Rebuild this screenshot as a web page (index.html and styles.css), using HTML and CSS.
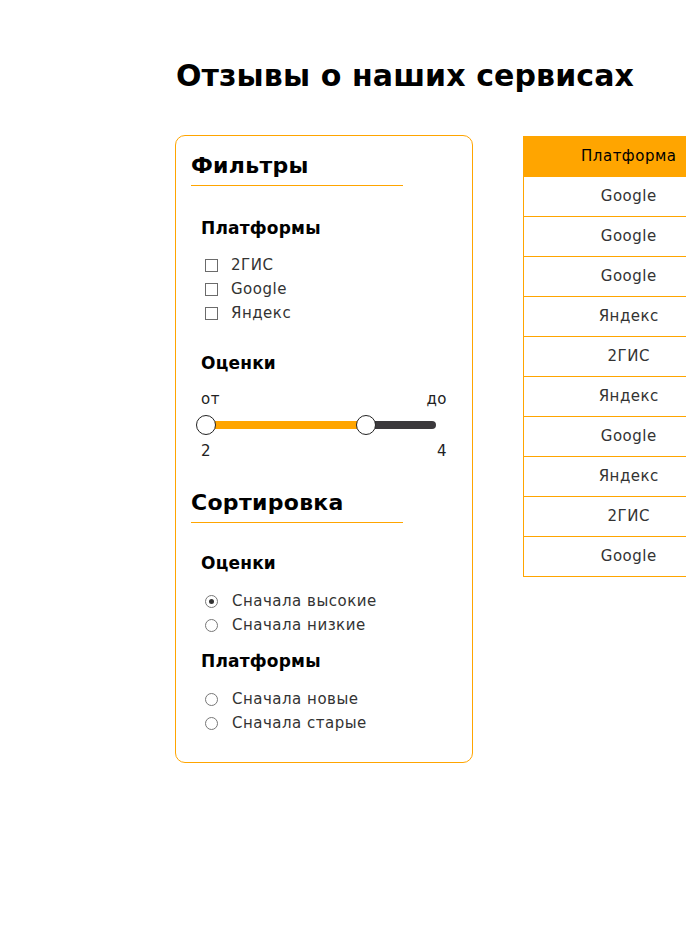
FILE: index.html
```html
<!DOCTYPE html>
<html lang="ru">
<head>
<meta charset="utf-8">
<title>Отзывы о наших сервисах</title>
<link rel="stylesheet" href="styles.css">
</head>
<body>
<main class="page">
  <h1 class="page-title">Отзывы о наших сервисах</h1>
  <div class="layout">
    <aside class="panel">
      <h2 class="section-title">Фильтры</h2>
      <div class="group group-first">
        <h3 class="group-title">Платформы</h3>
        <ul class="options">
          <li class="option"><span class="checkbox"></span>2ГИС</li>
          <li class="option"><span class="checkbox"></span>Google</li>
          <li class="option"><span class="checkbox"></span>Яндекс</li>
        </ul>
      </div>
      <div class="group group-rating">
        <h3 class="group-title">Оценки</h3>
        <div class="range-labels"><span>от</span><span>до</span></div>
        <div class="slider">
          <div class="track"><span class="fill" style="width:160px"></span><span class="rest"></span></div>
          <span class="thumb" style="left:0px"></span>
          <span class="thumb" style="left:160px"></span>
        </div>
        <div class="range-values"><span>2</span><span>4</span></div>
      </div>
      <h2 class="section-title sort-title">Сортировка</h2>
      <div class="group group-sort">
        <h3 class="group-title">Оценки</h3>
        <ul class="options radios">
          <li class="option"><span class="radio checked"></span>Сначала высокие</li>
          <li class="option"><span class="radio"></span>Сначала низкие</li>
        </ul>
      </div>
      <div class="group group-tight">
        <h3 class="group-title">Платформы</h3>
        <ul class="options radios">
          <li class="option"><span class="radio"></span>Сначала новые</li>
          <li class="option"><span class="radio"></span>Сначала старые</li>
        </ul>
      </div>
    </aside>
    <table class="reviews">
      <thead>
        <tr><th>Платформа</th></tr>
      </thead>
      <tbody>
        <tr><td>Google</td></tr>
        <tr><td>Google</td></tr>
        <tr><td>Google</td></tr>
        <tr><td>Яндекс</td></tr>
        <tr><td>2ГИС</td></tr>
        <tr><td>Яндекс</td></tr>
        <tr><td>Google</td></tr>
        <tr><td>Яндекс</td></tr>
        <tr><td>2ГИС</td></tr>
        <tr><td>Google</td></tr>
      </tbody>
    </table>
  </div>
</main>
</body>
</html>
```

FILE: styles.css
```css
* { box-sizing: border-box; }

html, body {
  margin: 0;
  background: #fff;
  overflow-x: hidden;
}

body {
  font-family: "DejaVu Sans", "Noto Sans", sans-serif;
  color: #222;
}

.page {
  padding: 56px 0 0 175px;
  width: 900px;
}

.page-title {
  margin: 0 0 39px 1px;
  font-size: 30px;
  line-height: 40px;
  font-weight: 700;
  color: #000;
  letter-spacing: 0.1px;
}

.layout {
  display: flex;
  align-items: flex-start;
  gap: 50px;
}

.panel {
  width: 298px;
  flex: none;
  border: 1px solid #ffa500;
  border-radius: 10px;
  padding: 16px 15px 27px 15px;
}

.section-title {
  margin: 0;
  width: 212px;
  font-size: 22px;
  line-height: 28px;
  font-weight: 700;
  color: #000;
  padding-bottom: 5px;
  border-bottom: 1px solid #ffa500;
  letter-spacing: 0.3px;
}

.sort-title {
  margin-top: 28px;
}

.group {
  padding: 0 10px;
  margin-top: 28px;
}

.group-first {
  margin-top: 31px;
}

.group-rating {
  margin-top: 27px;
}

.group-sort {
  margin-top: 29px;
}

.group-tight {
  margin-top: 13px;
}

.group-title {
  margin: 0;
  font-size: 17px;
  line-height: 22px;
  font-weight: 700;
  color: #000;
  letter-spacing: 0.2px;
}

.options {
  list-style: none;
  margin: 14px 0 0;
  padding: 0;
}

.radios {
  margin-top: 15px;
}

.option {
  display: flex;
  align-items: center;
  height: 24px;
  font-size: 15px;
  letter-spacing: 0.5px;
  color: #333;
  padding-left: 4px;
}

.checkbox {
  width: 13px;
  height: 13px;
  border: 1.5px solid #6b6b6b;
  margin-right: 13px;
  flex: none;
}

.radio {
  width: 13px;
  height: 13px;
  border: 1.5px solid #777;
  border-radius: 50%;
  margin-right: 14px;
  flex: none;
  display: flex;
  align-items: center;
  justify-content: center;
}

.radio.checked::after {
  content: "";
  width: 5px;
  height: 5px;
  border-radius: 50%;
  background: #333;
}

.range-labels,
.range-values {
  display: flex;
  justify-content: space-between;
  font-size: 15px;
  letter-spacing: 0.5px;
  color: #222;
  width: 246px;
}

.range-labels {
  margin-top: 15px;
  line-height: 20px;
}

.range-values {
  line-height: 20px;
  margin-top: 5px;
}

.slider {
  position: relative;
  height: 22px;
  margin-top: 5px;
  margin-left: 5px;
  width: 230px;
  display: flex;
  align-items: center;
}

.track {
  display: flex;
  width: 230px;
  height: 8px;
}

.fill {
  background: #ffa500;
  flex: none;
}

.rest {
  flex: 1;
  background: #3b393c;
  border-radius: 0 4px 4px 0;
}

.thumb {
  position: absolute;
  top: 1px;
  width: 20px;
  height: 20px;
  margin-left: -10px;
  border-radius: 50%;
  background: #fff;
  border: 1.5px solid #222;
}

.reviews {
  border-collapse: collapse;
  border-left: 1px solid #ffa500;
  flex: none;
  margin-top: 1px;
}

.reviews th,
.reviews td {
  width: 210px;
  height: 40px;
  text-align: center;
  font-size: 15px;
  letter-spacing: 0.5px;
  padding: 0;
  border-bottom: 1px solid #ffa500;
}

.reviews th {
  background: #ffa500;
  font-weight: 500;
  color: #000;
}

.reviews td {
  color: #333;
}
```
